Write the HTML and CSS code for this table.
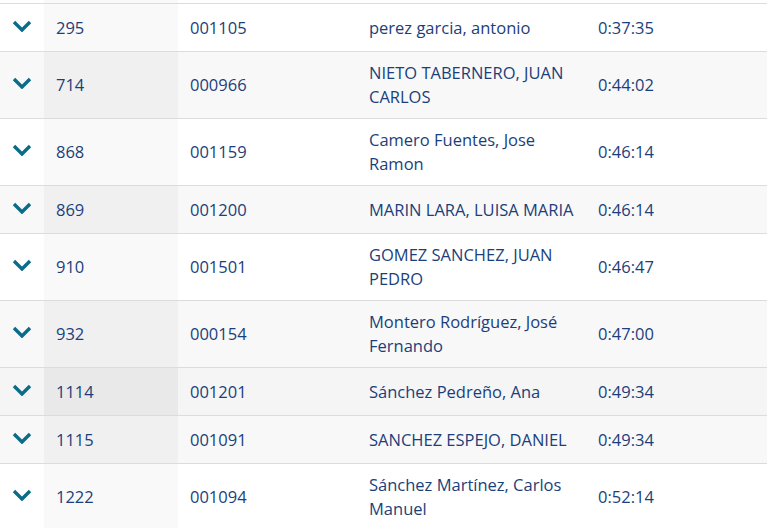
FILE: index.html
```html
<!DOCTYPE html>
<html lang="es">
<head>
<meta charset="utf-8">
<title>Clasificación</title>
<link rel="stylesheet" href="styles.css">
</head>
<body>
<table class="results">
  <colgroup>
    <col class="c-toggle"><col class="c-pos"><col class="c-dorsal"><col class="c-name"><col class="c-time">
  </colgroup>
  <tbody>
    <tr class="stub"><td></td><td class="sorted"></td><td></td><td></td><td></td></tr>
    <tr><td class="tog"><svg class="chev" viewBox="0 0 20 12"><path d="M2 2 L10 10 L18 2"/></svg></td><td class="sorted">295</td><td>001105</td><td>perez garcia, antonio</td><td>0:37:35</td></tr>
    <tr><td class="tog"><svg class="chev" viewBox="0 0 20 12"><path d="M2 2 L10 10 L18 2"/></svg></td><td class="sorted">714</td><td>000966</td><td>NIETO TABERNERO, JUAN CARLOS</td><td>0:44:02</td></tr>
    <tr><td class="tog"><svg class="chev" viewBox="0 0 20 12"><path d="M2 2 L10 10 L18 2"/></svg></td><td class="sorted">868</td><td>001159</td><td>Camero Fuentes, Jose Ramon</td><td>0:46:14</td></tr>
    <tr><td class="tog"><svg class="chev" viewBox="0 0 20 12"><path d="M2 2 L10 10 L18 2"/></svg></td><td class="sorted">869</td><td>001200</td><td>MARIN LARA, LUISA MARIA</td><td>0:46:14</td></tr>
    <tr><td class="tog"><svg class="chev" viewBox="0 0 20 12"><path d="M2 2 L10 10 L18 2"/></svg></td><td class="sorted">910</td><td>001501</td><td>GOMEZ SANCHEZ, JUAN PEDRO</td><td>0:46:47</td></tr>
    <tr><td class="tog"><svg class="chev" viewBox="0 0 20 12"><path d="M2 2 L10 10 L18 2"/></svg></td><td class="sorted">932</td><td>000154</td><td>Montero Rodríguez, José Fernando</td><td>0:47:00</td></tr>
    <tr class="hover"><td class="tog"><svg class="chev" viewBox="0 0 20 12"><path d="M2 2 L10 10 L18 2"/></svg></td><td class="sorted">1114</td><td>001201</td><td>Sánchez Pedreño, Ana</td><td>0:49:34</td></tr>
    <tr><td class="tog"><svg class="chev" viewBox="0 0 20 12"><path d="M2 2 L10 10 L18 2"/></svg></td><td class="sorted">1115</td><td>001091</td><td>SANCHEZ ESPEJO, DANIEL</td><td>0:49:34</td></tr>
    <tr><td class="tog"><svg class="chev" viewBox="0 0 20 12"><path d="M2 2 L10 10 L18 2"/></svg></td><td class="sorted">1222</td><td>001094</td><td>Sánchez Martínez, Carlos Manuel</td><td>0:52:14</td></tr>
  </tbody>
</table>
</body>
</html>
```

FILE: styles.css
```css
html, body {
  margin: 0;
  padding: 0;
  background: #ffffff;
}
body {
  font-family: "Open Sans", "Liberation Sans", sans-serif;
  font-size: 16.5px;
  color: #1b3f7b;
  overflow: hidden;
}
.results {
  width: 767px;
  border-collapse: collapse;
  table-layout: fixed;
}
.c-toggle { width: 44px; }
.c-pos { width: 134px; }
.c-dorsal { width: 179px; }
.c-name { width: 229px; }
.c-time { width: auto; }

.results td {
  padding: 9px 12px;
  line-height: 24px;
  vertical-align: middle;
  border-bottom: 1px solid #dcdcdc;
  text-align: left;
}
.results tr:nth-child(odd) td { background: #f8f8f8; }
.results tr:nth-child(even) td { background: #ffffff; }
.results tr:nth-child(odd) td.sorted { background: #f0f0f0; }
.results tr:nth-child(even) td.sorted { background: #f9f9f9; }
.results tr.hover td { background: #f5f5f5; }
.results tr.hover td.sorted { background: #e9e9e9; }

.results tr.stub td {
  padding: 0;
  height: 3px;
  line-height: 0;
  background: #ffffff;
}
.results tr.stub td.sorted { background: #f9f9f9; }

.results td.tog {
  padding: 7px 0 11px 12px;
  height: 29px;
}
.chev {
  display: block;
  width: 20px;
  height: 12px;
  fill: none;
  stroke: #0a6c88;
  stroke-width: 3.4;
  stroke-linecap: butt;
  stroke-linejoin: miter;
}
```
